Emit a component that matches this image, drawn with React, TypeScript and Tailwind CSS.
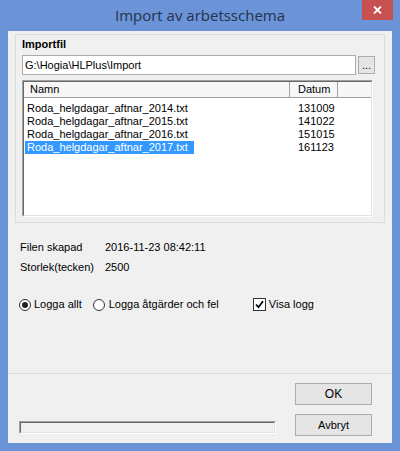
const files = [
  { name: "Roda_helgdagar_aftnar_2014.txt", date: "131009" },
  { name: "Roda_helgdagar_aftnar_2015.txt", date: "141022" },
  { name: "Roda_helgdagar_aftnar_2016.txt", date: "151015" },
  { name: "Roda_helgdagar_aftnar_2017.txt", date: "161123" },
];

const Sunken = ({ className, children }: { className: string; children?: React.ReactNode }) => (
  <div className={`border border-t-[#a0a0a0] border-l-[#a0a0a0] border-r-white border-b-white ${className}`}>
    <div className="h-full w-full border border-t-[#696969] border-l-[#696969] border-r-[#e3e3e3] border-b-[#e3e3e3]">
      {children}
    </div>
  </div>
);

export default function App() {
  return (
    <div
      className="w-[400px] h-[451px] bg-[#6b93d8] flex flex-col text-[11px] text-black"
      style={{ fontFamily: '"Liberation Sans", Arial, sans-serif' }}
    >
      {/* Title bar */}
      <div className="relative h-[31px] flex items-center justify-center">
        <span
          className="text-[15px] text-[#24324b] pb-[1px]"
          style={{ fontFamily: '"Open Sans", "Noto Sans", sans-serif' }}
        >
          Import av arbetsschema
        </span>
        <div className="absolute right-[7px] top-0 w-[31px] h-[20px] bg-[#c75050] flex items-center justify-center">
          <svg width="9" height="8" viewBox="0 0 9 8">
            <path d="M1 0.5 L8 7.5 M8 0.5 L1 7.5" stroke="white" strokeWidth="1.8" />
          </svg>
        </div>
      </div>

      {/* Client area */}
      <div className="mx-[8px] mb-[8px] flex-1 bg-[#f0f0f0] flex flex-col">
        <div className="h-[343px] border-b border-[#dcdcdc] flex flex-col">
          {/* Group box */}
          <div className="mt-[3px] ml-[7px] w-[370px] h-[189px] border border-[#dcdcdc] flex flex-col pl-[6px]">
            <div className="font-bold pt-[3px] h-[20px] leading-[13px]">Importfil</div>
            <div className="flex items-start gap-[2px]">
              <div className="w-[334px] h-[20px] bg-white border border-[#acacac] flex items-center pl-[2px]">
                G:\Hogia\HLPlus\Import
              </div>
              <div className="mt-[1px] w-[17px] h-[18px] bg-[#e5e5e5] border border-[#acacac] flex items-end justify-center leading-[12px] pb-[2px]">
                ...
              </div>
            </div>
            <Sunken className="mt-[5px] w-[351px] h-[137px] bg-white">
              <div className="flex h-[16px] bg-[#f7f7f7] border-b border-[#a0a0a0]">
                <div className="w-[266px] border-r border-[#a0a0a0] pl-[6px] leading-[15px]">Namn</div>
                <div className="w-[48px] border-r border-[#a0a0a0] pl-[8px] leading-[15px]">Datum</div>
                <div className="flex-1" />
              </div>
              <div className="pt-[4px]">
                {files.map((f, i) => (
                  <div key={i} className="flex h-[13px] leading-[13px]">
                    <div className="w-[267px] pl-[1px]">
                      <span
                        className={`inline-block pl-[2px] pr-[6px] ${
                          i === 3 ? "bg-[#3399ff] text-white" : ""
                        }`}
                      >
                        {f.name}
                      </span>
                    </div>
                    <div className="pl-[7px]">{f.date}</div>
                  </div>
                ))}
              </div>
            </Sunken>
          </div>

          {/* Info */}
          <div className="mt-[18px] pl-[12px] flex flex-col gap-[7px] leading-[13px]">
            <div className="flex">
              <span className="w-[85px]">Filen skapad</span>
              <span>2016-11-23 08:42:11</span>
            </div>
            <div className="flex">
              <span className="w-[85px]">Storlek(tecken)</span>
              <span>2500</span>
            </div>
          </div>

          {/* Options */}
          <div className="mt-[24px] pl-[11px] flex items-center leading-[13px]">
            <div className="flex items-center gap-[3px]">
              <div className="w-[12px] h-[12px] rounded-full border border-[#333] bg-white flex items-center justify-center">
                <div className="w-[6px] h-[6px] rounded-full bg-[#222]" />
              </div>
              <span>Logga allt</span>
            </div>
            <div className="ml-[11px] flex items-center gap-[4px]">
              <div className="w-[12px] h-[12px] rounded-full border border-[#333] bg-white" />
              <span>Logga åtgärder och fel</span>
            </div>
            <div className="ml-[34px] flex items-center gap-[3px]">
              <div className="w-[13px] h-[13px] border border-[#333] bg-white flex items-center justify-center">
                <svg width="9" height="9" viewBox="0 0 9 9">
                  <path d="M1 4.5 L3.5 7.2 L8 1.2" stroke="black" strokeWidth="1.8" fill="none" />
                </svg>
              </div>
              <span>Visa logg</span>
            </div>
          </div>
        </div>

        {/* Bottom */}
        <div className="flex-1 flex pl-[11px] pr-[20px]">
          <div className="flex-1 flex items-end pb-[9px]">
            <Sunken className="w-[257px] h-[13px] bg-[#f0f0f0]" />
          </div>
          <div className="flex flex-col gap-[9px] pt-[9px]">
            <button className="w-[77px] h-[22px] bg-[#e5e5e5] border border-[#acacac] text-[12px]">OK</button>
            <button className="w-[77px] h-[22px] bg-[#e5e5e5] border border-[#acacac]">Avbryt</button>
          </div>
        </div>
      </div>
    </div>
  );
}
